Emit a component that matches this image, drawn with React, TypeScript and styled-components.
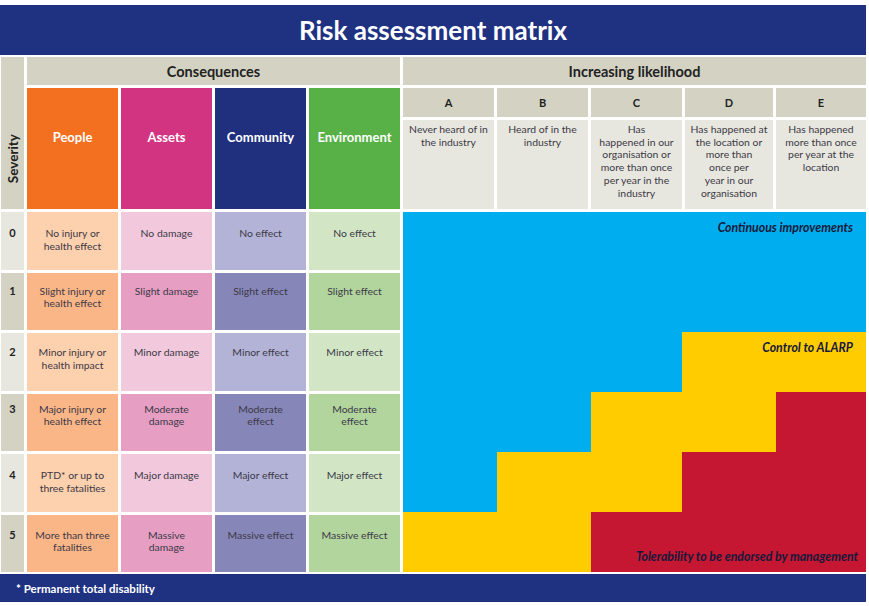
import styled, { createGlobalStyle } from 'styled-components'

const GlobalStyle = createGlobalStyle`
  body {
    margin: 0;
    background: #ffffff;
    font-family: Lato, "Open Sans", sans-serif;
  }
`

const NAVY = '#1f3282'
const BEIGE = '#d4d2c2'
const PALE = '#e8e7df'
const TEXT = '#3b3946'

const Page = styled.div`
  width: 866px;
  padding-top: 5px;
  display: flex;
  flex-direction: column;
  gap: 2px;
`

const TitleBar = styled.div`
  height: 50px;
  background: ${NAVY};
  color: #ffffff;
  font-size: 26px;
  font-weight: 700;
  display: flex;
  align-items: center;
  justify-content: center;
`

const Matrix = styled.div`
  display: grid;
  grid-template-columns: 23px 91px 91px 91px 91px 91px 91px 91px 88px 90px;
  grid-template-rows: 28px 29px 89px repeat(6, 57.5px);
  gap: 3px;
  margin-left: 1px;
`

const SeverityHead = styled.div`
  grid-row: 1 / 4;
  grid-column: 1;
  background: ${BEIGE};
  display: flex;
  flex-direction: column;
  align-items: center;
  justify-content: flex-end;
  padding-bottom: 26px;
`

const SeverityLabel = styled.span`
  writing-mode: vertical-rl;
  transform: rotate(180deg);
  font-size: 13.5px;
  font-weight: 700;
  color: #222;
`

const GroupHead = styled.div<{ $span: number }>`
  grid-column: span ${(p) => p.$span};
  background: ${BEIGE};
  display: flex;
  align-items: center;
  justify-content: center;
  font-size: 14.5px;
  font-weight: 700;
  color: #222;
`

const CategoryHead = styled.div<{ $bg: string }>`
  grid-row: span 2;
  background: ${(p) => p.$bg};
  color: #ffffff;
  font-size: 13px;
  font-weight: 700;
  text-align: center;
  padding-top: 41px;
`

const LetterCell = styled.div`
  background: ${BEIGE};
  display: flex;
  align-items: center;
  justify-content: center;
  font-size: 11px;
  font-weight: 700;
  color: #222;
`

const DescCell = styled.div`
  background: ${PALE};
  padding-top: 3px;
  text-align: center;
  font-size: 10.4px;
  line-height: 12.7px;
  color: ${TEXT};
`

const SeverityNum = styled.div<{ $dark: boolean; $pad: number }>`
  background: ${(p) => (p.$dark ? BEIGE : PALE)};
  padding-top: ${(p) => p.$pad}px;
  text-align: center;
  font-size: 11px;
  line-height: 12.7px;
  font-weight: 700;
  color: #222;
`

const ConsequenceCell = styled.div<{ $bg: string; $pad: number }>`
  background: ${(p) => p.$bg};
  padding-top: ${(p) => p.$pad}px;
  text-align: center;
  font-size: 10.4px;
  line-height: 12.7px;
  color: ${TEXT};
`

const RiskZone = styled.div`
  grid-column: 6 / 11;
  grid-row: 4 / 10;
  display: grid;
  grid-template-columns: 94px 94px 91px 94px 90px;
  grid-template-rows: repeat(6, 1fr);
`

const RiskSwatch = styled.div<{ $bg: string; $row: number; $col: number }>`
  grid-row: ${(p) => p.$row};
  grid-column: ${(p) => p.$col};
  background: ${(p) => p.$bg};
`

const ZoneLabel = styled.div<{ $row: number; $bottom?: boolean; $right: number }>`
  grid-row: ${(p) => p.$row};
  grid-column: 1 / -1;
  justify-self: end;
  align-self: ${(p) => (p.$bottom ? 'end' : 'start')};
  padding: ${(p) => (p.$bottom ? `0 ${p.$right}px 8px 0` : `8px ${p.$right}px 0 0`)};
  font-size: 12.3px;
  font-weight: 700;
  font-style: italic;
  color: #15193a;
  z-index: 1;
`

const Footer = styled.div`
  height: 28px;
  background: ${NAVY};
  color: #ffffff;
  font-size: 11.5px;
  font-weight: 700;
  display: flex;
  align-items: center;
  padding-left: 16px;
`

const categories = [
  { name: 'People', head: '#f37021', light: '#fdd0ae', dark: '#fbb688' },
  { name: 'Assets', head: '#d33482', light: '#f2c9dc', dark: '#e69ec3' },
  { name: 'Community', head: '#20307e', light: '#b3b3d7', dark: '#8786b9' },
  { name: 'Environment', head: '#58b146', light: '#d2e6c6', dark: '#b2d59e' },
]

const likelihood = [
  { letter: 'A', lines: ['Never heard of in', 'the industry'] },
  { letter: 'B', lines: ['Heard of in the', 'industry'] },
  { letter: 'C', lines: ['Has', 'happened in our', 'organisation or', 'more than once', 'per year in the', 'industry'] },
  { letter: 'D', lines: ['Has happened at', 'the location or', 'more than', 'once per', 'year in our', 'organisation'] },
  { letter: 'E', lines: ['Has happened', 'more than once', 'per year at the', 'location'] },
]

const rows = [
  { pad: 15, cells: [['No injury or', 'health effect'], ['No damage'], ['No effect'], ['No effect']] },
  { pad: 12, cells: [['Slight injury or', 'health effect'], ['Slight damage'], ['Slight effect'], ['Slight effect']] },
  { pad: 13, cells: [['Minor injury or', 'health impact'], ['Minor damage'], ['Minor effect'], ['Minor effect']] },
  { pad: 9, cells: [['Major injury or', 'health effect'], ['Moderate', 'damage'], ['Moderate', 'effect'], ['Moderate', 'effect']] },
  { pad: 15, cells: [['PTD* or up to', 'three fatalities'], ['Major damage'], ['Major effect'], ['Major effect']] },
  { pad: 14, cells: [['More than three', 'fatalities'], ['Massive', 'damage'], ['Massive effect'], ['Massive effect']] },
]

const zoneColours: Record<string, string> = { b: '#00adee', y: '#ffcc00', r: '#c51632' }
const zone = ['bbbbb', 'bbbbb', 'bbbyy', 'bbyyr', 'byyrr', 'yyrrr']

function Lines({ lines }: { lines: string[] }) {
  return (
    <>
      {lines.map((l, i) => (
        <div key={i}>{l}</div>
      ))}
    </>
  )
}

export default function App() {
  return (
    <Page>
      <GlobalStyle />
      <TitleBar>Risk assessment matrix</TitleBar>
      <Matrix>
        <SeverityHead>
          <SeverityLabel>Severity</SeverityLabel>
        </SeverityHead>
        <GroupHead $span={4}>Consequences</GroupHead>
        <GroupHead $span={5}>Increasing likelihood</GroupHead>
        {categories.map((c) => (
          <CategoryHead key={c.name} $bg={c.head}>
            {c.name}
          </CategoryHead>
        ))}
        {likelihood.map((l) => (
          <LetterCell key={l.letter}>{l.letter}</LetterCell>
        ))}
        {likelihood.map((l) => (
          <DescCell key={l.letter}>
            <Lines lines={l.lines} />
          </DescCell>
        ))}
        {rows.map((r, i) => [
          <SeverityNum key={`n${i}`} $dark={i % 2 === 1} $pad={r.pad}>
            {i}
          </SeverityNum>,
          ...r.cells.map((cell, j) => (
            <ConsequenceCell
              key={`c${i}-${j}`}
              $pad={r.pad}
              $bg={i % 2 === 1 ? categories[j].dark : categories[j].light}
            >
              <Lines lines={cell} />
            </ConsequenceCell>
          )),
        ])}
        <RiskZone>
          {zone.map((row, i) =>
            row.split('').map((k, j) => (
              <RiskSwatch key={`${i}-${j}`} $row={i + 1} $col={j + 1} $bg={zoneColours[k]} />
            ))
          )}
          <ZoneLabel $row={1} $right={13}>Continuous improvements</ZoneLabel>
          <ZoneLabel $row={3} $right={13}>Control to ALARP</ZoneLabel>
          <ZoneLabel $row={6} $right={8} $bottom>
            Tolerability to be endorsed by management
          </ZoneLabel>
        </RiskZone>
      </Matrix>
      <Footer>* Permanent total disability</Footer>
    </Page>
  )
}
